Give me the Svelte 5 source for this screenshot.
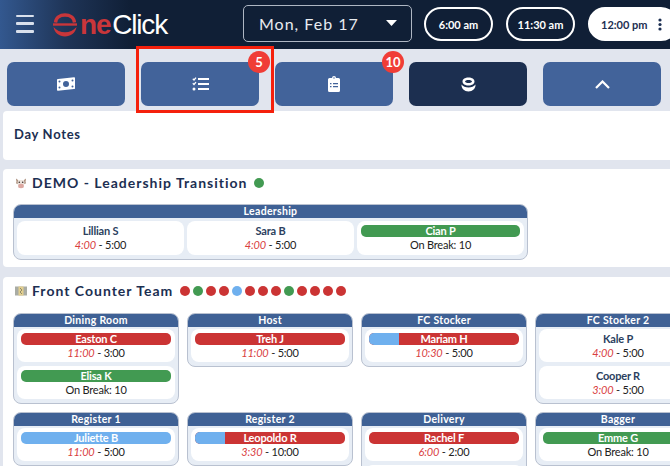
<script>
  const dotColors = { r: '#cb3434', g: '#429a52', b: '#6fb0ee' };
  const demoDots = ['g'];
  const fcDots = ['r','g','r','r','b','r','r','r','g','r','r','r','r'];
  const leadership = [
    { name: 'Lillian S', start: '4:00', end: '5:00' },
    { name: 'Sara B', start: '4:00', end: '5:00' },
    { name: 'Cian P', pill: 'g', brk: true }
  ];
  const roles = [
    { title: 'Dining Room', people: [
      { name: 'Easton C', pill: 'r', start: '11:00', end: '3:00' },
      { name: 'Elisa K', pill: 'g', brk: true } ] },
    { title: 'Host', people: [{ name: 'Treh J', pill: 'r', start: '11:00', end: '5:00' }] },
    { title: 'FC Stocker', people: [{ name: 'Mariam H', pill: 'r', lead: 30, start: '10:30', end: '5:00' }] },
    { title: 'FC Stocker 2', people: [
      { name: 'Kale P', start: '4:00', end: '5:00' },
      { name: 'Cooper R', start: '3:00', end: '5:00' } ] },
    { title: 'Register 1', people: [{ name: 'Juliette B', pill: 'b', start: '11:00', end: '5:00' }] },
    { title: 'Register 2', people: [{ name: 'Leopoldo R', pill: 'r', lead: 30, start: '3:30', end: '10:00' }] },
    { title: 'Delivery', people: [
      { name: 'Rachel F', pill: 'r', start: '6:00', end: '2:00' },
      { empty: true } ] },
    { title: 'Bagger', people: [{ name: 'Emme G', pill: 'g', brk: true }] }
  ];
</script>

{#snippet person(p)}
  <div class="cell">
    {#if p.empty}
      <!-- continues below the fold -->
    {:else}
      {#if p.pill}
        <div class="pill {p.pill}">
          {#if p.lead}<span class="lead" style="width:{p.lead}px"></span>{/if}
          <span class="pname">{p.name}</span>
        </div>
      {:else}
        <div class="plain">{p.name}</div>
      {/if}
      {#if p.brk}
        <div class="time">On Break: 10</div>
      {:else}
        <div class="time"><em>{p.start}</em> - {p.end}</div>
      {/if}
    {/if}
  </div>
{/snippet}

{#snippet dots(list)}
  <span class="dots">
    {#each list as d}<i style="background:{dotColors[d]}"></i>{/each}
  </span>
{/snippet}

<div class="page">
  <header>
    <button class="burger" aria-label="Menu"><i></i><i></i><i></i></button>
    <div class="logo">
      <svg class="mark" viewBox="0 0 26 24" width="26" height="24" aria-hidden="true">
        <path d="M3.500 9.500C4 4.500 8 2 13 2s9 2.500 9.500 7.500" fill="none" stroke="#c9363a" stroke-width="3.400"/>
        <path d="M1 11.500h24" stroke="#c9363a" stroke-width="2.400"/>
        <path d="M1.500 14c1 6 6 9.500 11.500 9.500S23.500 20 24.500 14c-3 3.500-7 5.200-11.500 5.200S4.500 17.500 1.500 14z" fill="#c9363a"/>
      </svg>
      <span class="ne">ne</span><span class="click">Click</span>
    </div>
    <div class="date">
      <span>Mon, Feb 17</span>
      <svg width="11" height="6" viewBox="0 0 11 6" aria-hidden="true"><path d="M0 0h11L5.500 6z" fill="#fff"/></svg>
    </div>
    <div class="times">
      <span class="time-pill">6:00 am</span>
      <span class="time-pill">11:30 am</span>
      <span class="time-pill on">12:00 pm
        <svg width="4" height="13" viewBox="0 0 4 13" aria-hidden="true"><circle cx="2" cy="2" r="1.600"/><circle cx="2" cy="6.500" r="1.600"/><circle cx="2" cy="11" r="1.600"/></svg>
      </span>
    </div>
  </header>

  <nav>
    <button class="tab" aria-label="Cash">
      <svg width="18" height="14" viewBox="0 0 18 14" aria-hidden="true">
        <path fill="#fff" fill-rule="evenodd" d="M0 2.800Q0 2 1 1.900L17 .3Q18 .2 18 1v10.200q0 .8-1 .9L1 13.700q-1 .1-1-.7zM9 4a3 3 0 1 0 0 6 3 3 0 0 0 0-6zM2.500 3.600a1 1 0 1 0 0 2 1 1 0 0 0 0-2zM15.500 2.400a1 1 0 1 0 0 2 1 1 0 0 0 0-2zM2.500 9.600a1 1 0 1 0 0 2 1 1 0 0 0 0-2zM15.500 8.400a1 1 0 1 0 0 2 1 1 0 0 0 0-2z"/>
      </svg>
    </button>
    <div class="tab-wrap">
      <button class="tab" aria-label="Tasks">
        <svg width="17" height="14" viewBox="0 0 17 14" aria-hidden="true">
          <g fill="none" stroke="#fff"><path stroke-width="1.300" d="M.8 1.800l1.200 1.200L4 .6M.8 6.300l1.200 1.200L4 5.100"/><path stroke-width="1.800" d="M6 2h11M6 7h11M6 12h11"/></g>
          <circle cx="2" cy="12" r="1.500" fill="#fff"/>
        </svg>
      </button>
      <span class="badge">5</span>
    </div>
    <div class="tab-wrap">
      <button class="tab" aria-label="Clipboard">
        <svg width="12" height="16" viewBox="0 0 12 16" aria-hidden="true">
          <path fill="#fff" fill-rule="evenodd" d="M1.500 2H4a2 2 0 0 1 4 0h2.500A1.500 1.500 0 0 1 12 3.500v11a1.500 1.500 0 0 1-1.500 1.500h-9A1.500 1.500 0 0 1 0 14.500v-11A1.500 1.500 0 0 1 1.500 2zM2 7v1.300h1.500V7zM5 7v1.300h5V7zM2 10v1.300h1.500V10zM5 10v1.300h5V10zM5.300 2a.7.7 0 1 0 1.400 0 .7.7 0 0 0-1.400 0z"/>
        </svg>
      </button>
      <span class="badge">10</span>
    </div>
    <button class="tab dark" aria-label="OneClick">
      <svg width="15" height="15" viewBox="0 0 15 15" aria-hidden="true">
        <path fill="#fff" fill-rule="evenodd" d="M7.500.5c3.500 0 6 1.600 6 4s-2.500 4-6 4-6-1.600-6-4 2.500-4 6-4zM7.500 3C5.500 3 4 3.600 4 4.500S5.500 6 7.500 6 11 5.400 11 4.500 9.500 3 7.500 3z"/>
        <path fill="#fff" d="M.5 7.500C2 9.500 4.500 10.500 7.500 10.500s5.500-1 7-3c.3 4-3 7-7 7s-7.300-3-7-7z"/>
      </svg>
    </button>
    <button class="tab" aria-label="Collapse">
      <svg width="15" height="9" viewBox="0 0 15 9" aria-hidden="true"><path d="M1 8l6.500-6.500L14 8" fill="none" stroke="#fff" stroke-width="2.200"/></svg>
    </button>
  </nav>

  <div class="highlight"></div>

  <section class="notes"><h2>Day Notes</h2></section>

  <section class="demo">
    <h2>
      <svg class="emoji" width="12" height="12" viewBox="0 0 12 12" aria-hidden="true">
        <path d="M1 1.500l2 1.500h6l2-1.500-.5 3.500.5 1-1 1H2L1 6l.5-1z" fill="#a98c78"/>
        <path d="M3 3h6l.5 3-1 5h-5l-1-5z" fill="#ece4dd"/>
        <ellipse cx="6" cy="9" rx="2.800" ry="2.200" fill="#dca7a0"/>
        <circle cx="4.300" cy="5.300" r=".8" fill="#3a2c28"/><circle cx="7.700" cy="5.300" r=".8" fill="#3a2c28"/>
      </svg>
      DEMO - Leadership Transition {@render dots(demoDots)}
    </h2>
    <div class="role wide">
      <div class="role-title">Leadership</div>
      <div class="role-body row">
        {#each leadership as p}{@render person(p)}{/each}
      </div>
    </div>
  </section>

  <section class="team">
    <h2>
      <svg class="emoji" width="12" height="10" viewBox="0 0 12 10" aria-hidden="true">
        <rect width="12" height="9" y=".5" fill="#a9aca4"/>
        <rect x="3.500" y=".5" width="5" height="9" fill="#e3cf8f"/>
        <path d="M5 2l2 2-2 2 2 2" fill="none" stroke="#8e8a6c"/>
      </svg>
      Front Counter Team {@render dots(fcDots)}
    </h2>
    <div class="grid">
      {#each roles as r}
        <div class="role">
          <div class="role-title">{r.title}</div>
          <div class="role-body">
            {#each r.people as p}{@render person(p)}{/each}
          </div>
        </div>
      {/each}
    </div>
  </section>
</div>

<style>
  :global(html), :global(body) { margin: 0; overflow: hidden; background: #e1e5ee; }
  .page {
    position: relative;
    width: 670px; height: 466px; overflow: hidden;
    background: #e1e5ee;
    font-family: "Lato", "Noto Sans", sans-serif;
    color: #1c2f52;
  }
  header {
    height: 49px; display: flex; align-items: center;
    background: linear-gradient(90deg, #33588f 0, #1f3558 65px, #101f36 130px);
    padding-left: 16px; box-sizing: border-box; overflow: hidden;
  }
  .burger {
    width: 18px; height: 18px; padding: 0; margin: -2px 0 0; background: none; border: 0;
    display: flex; flex-direction: column; justify-content: space-between; flex: none;
  }
  .burger i { display: block; height: 2.500px; border-radius: 1px; background: #d9e0ec; }
  .logo { display: flex; align-items: baseline; margin-left: 18px; width: 181px; flex: none; font-family: "Liberation Sans", sans-serif; font-size: 28px; line-height: 1; letter-spacing: -1.200px; }
  .mark { align-self: center; flex: none; margin: 0; }
  .ne { color: #c9363a; font-weight: 700; margin-left: 2px; }
  .click { color: #fff; margin-left: 2px; }
  .date {
    flex: none; width: 169px; height: 37px; box-sizing: border-box; margin-left: 10px; margin-top: -3px;
    border: 1px solid #aeb6c3; border-radius: 5px;
    display: flex; align-items: center; justify-content: space-between;
    padding: 0 14px 0 15px; color: #e8ebf0; font-size: 16px; letter-spacing: 1px;
  }
  .times { display: flex; gap: 13px; margin-left: 12px; margin-top: -1px; flex: none; }
  .time-pill {
    width: 69px; height: 34px; box-sizing: border-box; border: 2px solid #fff; border-radius: 17px;
    display: flex; align-items: center; justify-content: center;
    color: #fff; font-size: 11px; font-weight: 700;
  }
  .time-pill.on { width: 90px; background: #fff; color: #1c2f52; gap: 10px; justify-content: flex-start; padding-left: 11px; }
  .time-pill.on svg { fill: #1c2f52; }
  nav { display: flex; gap: 16px; padding: 13px 9px 5px 7px; }
  .tab-wrap { position: relative; flex: 1 1 0; display: flex; }
  .tab {
    flex: 1 1 0; height: 44px; border: 0; border-radius: 7px; background: #42639a; padding: 0;
    display: flex; align-items: center; justify-content: center;
  }
  .tab.dark { background: #1c2f50; }
  .badge {
    position: absolute; top: -11px; right: -11px; width: 22px; height: 22px; border-radius: 50%;
    background: #f03d36; color: #fff; font-weight: 700; font-size: 13px;
    display: flex; align-items: center; justify-content: center;
  }
  .highlight { position: absolute; left: 136px; top: 46px; width: 138px; height: 67px; box-sizing: border-box; border: 3px solid #f5200c; }
  section { background: #fff; margin-left: 3px; border-radius: 4px 0 0 4px; }
  h2 { margin: 0; font-size: 14px; font-weight: 700; letter-spacing: 1px; color: #1c2f52; display: flex; align-items: center; white-space: nowrap; }
  .notes { height: 49px; padding: 0 0 3px 11px; box-sizing: border-box; display: flex; align-items: center; margin-bottom: 9px; }
  .notes h2 { font-size: 13px; letter-spacing: .7px; }
  .demo { height: 98px; padding: 5px 0 0 10px; box-sizing: border-box; margin-bottom: 10px; }
  .team { padding: 5px 0 0 10px; }
  .emoji { flex: none; margin: 0 5px 0 2px; }
  .dots { display: inline-flex; gap: 3px; margin-left: 7px; }
  .dots i { width: 10px; height: 10px; border-radius: 50%; display: block; }
  .demo .role { margin-top: 13px; }
  .role {
    width: 166px; flex: none; box-sizing: border-box; border: 1px solid #b9c1d0; border-radius: 8px; overflow: hidden;
    background: #e7edf5; align-self: flex-start;
  }
  .role.wide { width: 515px; }
  .role-title {
    height: 12px; background: #3f6195; color: #fff; text-align: center;
    font-size: 10.500px; font-weight: 700; line-height: 13px; letter-spacing: .3px;
    border-bottom: 1px solid #3f6195;
  }
  .role-body { padding: 2px 3px 4px; display: flex; flex-direction: column; gap: 4px; }
  .role-body.row { flex-direction: row; gap: 3px; padding: 3px 3px 4px; }
  .grid { display: flex; flex-wrap: wrap; width: 700px; gap: 8px; margin-top: 14px; }
  .cell {
    flex: 1 1 0; background: #fff; border-radius: 8px; min-height: 33px; box-sizing: border-box;
    padding: 4px; text-align: center; font-size: 11px; line-height: 13px; color: #222; letter-spacing: -.2px;
  }
  .pill {
    height: 12px; border-radius: 5px; color: #fff; font-weight: 700; position: relative;
    font-size: 11px; line-height: 12px;
  }
  .pill.r { background: #cb3434; }
  .pill.g { background: #429a52; }
  .pill.b { background: #6fb0ee; }
  .lead { position: absolute; left: 0; top: 0; bottom: 0; background: #6fb0ee; border-radius: 5px 0 0 5px; }
  .pname { position: relative; }
  .plain { font-weight: 700; color: #2c3f60; height: 12px; line-height: 12px; }
  .time { margin-top: 1px; line-height: 13px; }
  .time em { color: #d9403f; }
</style>
